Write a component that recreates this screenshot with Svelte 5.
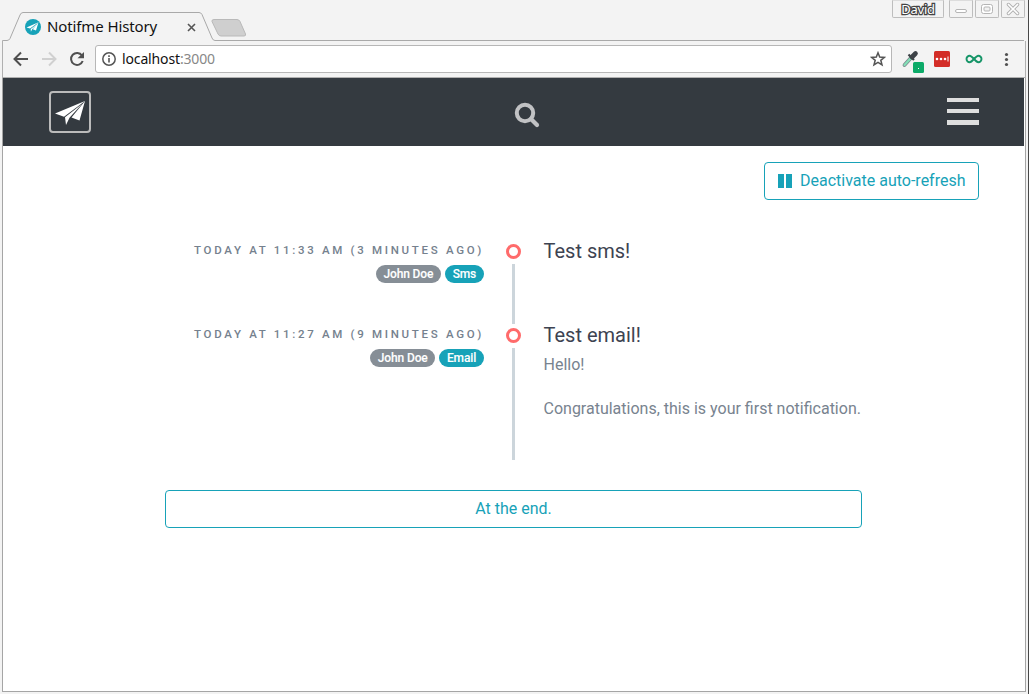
<script>
  const events = [
    { time: 'Today at 11:33 AM (3 minutes ago)', user: 'John Doe', channel: 'Sms', title: 'Test sms!', body: [] },
    {
      time: 'Today at 11:27 AM (9 minutes ago)',
      user: 'John Doe',
      channel: 'Email',
      title: 'Test email!',
      body: ['Hello!', 'Congratulations, this is your first notification.']
    }
  ];
</script>

<div class="window">
  <header class="tabstrip">
    <svg class="frame" width="1029" height="41" viewBox="0 0 1029 41" fill="none">
      <path d="M2 41Q2 40.5 4 40.5H7Q9 40.5 10 38.500L20 15Q21 12.500 23 12.500H199Q201 12.500 202 14.500L212 38Q213 40.500 215 40.500H1024" stroke="#a9a9a9" />
      <path d="M214 19.500H237Q239 19.500 240 21.500L245.500 34Q246 36 244 36H221Q219 36 218 34L212 21.500Q211.500 19.500 214 19.500Z" fill="#cfcfcf" stroke="#b9b9b9" />
    </svg>
    <div class="tab">
      <svg width="16" height="16" viewBox="0 0 16 16">
        <circle cx="8" cy="8" r="8" fill="#17a2b8" />
        <path d="M1.500 8.500L13.500 3.300 5 9.600ZM13.500 3.300L11 11.500 7.800 10.300ZM5.700 9.900L12 4.900 7.200 10.300 5.900 12.700Z" fill="#fff" />
      </svg>
      <span class="title">Notifme History</span>
      <svg class="x" width="9" height="9" viewBox="0 0 9 9"><path d="M1 1l7 7M8 1L1 8" stroke="#555" stroke-width="1.600" /></svg>
    </div>
    <div class="controls">
      <span class="control name">David</span>
      <span class="control"><svg width="24" height="17"><rect x="6.500" y="9.500" width="11" height="3" rx="1.500" fill="#fff" stroke="#b5b5b5" /></svg></span>
      <span class="control"><svg width="24" height="17"><rect x="6.500" y="4.500" width="11" height="9" rx="2" fill="#fff" stroke="#b5b5b5" /><rect x="9" y="7" width="6" height="4" rx="1" fill="#f2f2f2" stroke="#b5b5b5" /></svg></span>
      <span class="control"><svg width="24" height="17"><path d="M7.500 4.500l9 9m0-9l-9 9" stroke="#b0b0b0" stroke-width="3.500" stroke-linecap="round" /><path d="M7.500 4.500l9 9m0-9l-9 9" stroke="#fff" stroke-width="1.700" stroke-linecap="round" /></svg></span>
    </div>
  </header>

  <div class="toolbar">
    <svg class="nav" width="95" height="36" viewBox="0 0 95 36" fill="none">
      <path d="M28 18H15M21 11.500L14.500 18 21 24.500" stroke="#4f4f4f" stroke-width="2" />
      <path d="M42 18H55M49 11.500L55.500 18 49 24.500" stroke="#d0d0d0" stroke-width="2" />
      <path d="M82 14.500A6 6 0 1 0 82.700 20" stroke="#4f4f4f" stroke-width="2" />
      <path d="M84 11V17.200H77.500Z" fill="#4f4f4f" />
    </svg>
    <div class="address">
      <svg width="14" height="14" viewBox="0 0 14 14" fill="none"><circle cx="7" cy="7" r="6.200" stroke="#555" stroke-width="1.500" /><path d="M7 6v4.500M7 3.300v1.600" stroke="#555" stroke-width="1.600" /></svg>
      <span class="url">localhost<i>:3000</i></span>
      <svg class="star" width="16" height="16" viewBox="0 0 16 16"><path d="M8 1.800L9.700 6.100 14.300 6.400 10.800 9.300 12 13.900 8 11.400 4 13.900 5.200 9.300 1.700 6.400 6.300 6.100Z" fill="none" stroke="#555" stroke-width="1.500" /></svg>
    </div>
    <svg class="extensions" width="132" height="36" viewBox="892 41 132 36" fill="none">
      <path d="M904.500 65L911 57.800" stroke="#7d8a8e" stroke-width="3.800" stroke-linecap="round" />
      <path d="M904.500 65L910 59" stroke="#83dfb7" stroke-width="2.200" stroke-linecap="round" />
      <path d="M908.500 54.500L914 60" stroke="#3c4146" stroke-width="2.200" />
      <path d="M912 57L915.500 53.500" stroke="#3c4146" stroke-width="4.600" stroke-linecap="round" />
      <rect x="913" y="62" width="11" height="11" rx="1.500" fill="#0caa68" /><path d="M918 68.500h1" stroke="#fff" />
      <rect x="934" y="51" width="16" height="16" rx="1.500" fill="#d32d27" />
      <circle cx="937" cy="59" r="1.300" fill="#fff" /><circle cx="941" cy="59" r="1.300" fill="#fff" /><circle cx="945" cy="59" r="1.300" fill="#fff" /><path d="M948 56.500v5" stroke="#fff" />
      <path d="M974 59C972 56.800 971 55.800 969.700 55.800A3.200 3.200 0 0 0 969.700 62.200C972.500 62.200 975.500 55.800 978.300 55.800A3.200 3.200 0 0 1 978.300 62.200C977 62.200 976 61.200 974 59Z" stroke="#169568" stroke-width="1.900" />
      <g fill="#505050"><circle cx="1006.500" cy="54.500" r="1.600" /><circle cx="1006.500" cy="59.500" r="1.600" /><circle cx="1006.500" cy="64.500" r="1.600" /></g>
    </svg>
  </div>

  <main class="page">
    <nav class="navbar">
      <span class="logo">
        <svg width="38" height="38" viewBox="51 93 38 38">
          <path d="M55 113.500L85 101 64 116.700ZM85 101L79.500 120.500 71.500 117.500ZM65 117.300L82 104 69.500 117.800 66 125Z" fill="#fff" />
        </svg>
      </span>
      <svg class="search" width="26" height="26" viewBox="514 102 26 26" fill="none" stroke="#c1c2c4"><circle cx="525" cy="113" r="8.200" stroke-width="4" /><path d="M531 119L537 125" stroke-width="4.200" stroke-linecap="round" /></svg>
      <span class="burger"><b></b><b></b><b></b></span>
    </nav>
    <div class="actions">
      <button class="btn refresh">
        <svg width="14" height="14"><path d="M0 0h6v14h-6zM8 0h6v14h-6z" fill="#17a2b8" /></svg>
        <span>Deactivate auto-refresh</span>
      </button>
    </div>
    <section class="timeline">
      {#each events as event}
        <article class="event">
          <div class="info">
            <div class="time">{event.time}</div>
            <div class="badges"><span class="badge">{event.user}</span><span class="badge channel">{event.channel}</span></div>
          </div>
          <div class="marker"><span class="dot"></span><span class="line"></span></div>
          <div class="content">
            <h3>{event.title}</h3>
            {#each event.body as text}<p>{text}</p>{/each}
          </div>
        </article>
      {/each}
    </section>
    <button class="btn end">At the end.</button>
  </main>
</div>

<style>
  :global(body) { background: #f3f3f3; overflow: hidden; }
  * { box-sizing: border-box; }
  svg { display: block; flex: none; }
  .window { position: relative; width: 1029px; height: 694px; background: #f3f3f3; display: flex; flex-direction: column; border-right: 1px solid #484848; font-family: "Noto Sans", sans-serif; }
  .tabstrip { position: relative; height: 41px; display: flex; justify-content: space-between; }
  .frame { position: absolute; left: 0; top: 0; }
  .tab { position: relative; display: flex; align-items: center; height: 28px; margin: 13px 0 0 25px; }
  .title { width: 110px; margin: -2px 30px 0 6px; font: 15px/28px "Noto Sans", sans-serif; letter-spacing: -0.11px; color: #111; white-space: nowrap; }
  .controls { display: flex; gap: 2px; height: 18px; margin-right: 3px; }
  .control { width: 24px; height: 18px; border: 1px solid #bdbdbd; border-top-color: #dcdcdc; border-radius: 0 0 2px 2px; display: flex; justify-content: center; }
  .control svg { margin-top: -1px; }
  .name { width: 52px; margin-right: 3px; font: 13px/16px "Noto Sans", sans-serif; letter-spacing: -0.2px; color: #fff; -webkit-text-stroke: 2.5px #444; paint-order: stroke fill; }
  .toolbar { height: 37px; margin: 0 2px 0 2px; border: 1px solid #b0b0b0; border-width: 0 1px 1px; display: flex; }
  .nav { margin-left: -3px; }
  .address { width: 797px; height: 28px; margin-top: 4px; border: 1px solid #b7b7b7; border-radius: 3px; background: #fff; display: flex; align-items: center; padding: 0 5px 0 6px; }
  .url { margin-left: 6px; font-size: 14px; line-height: 26px; letter-spacing: -0.14px; color: #111; }
  .url i { font-style: normal; color: #888; }
  .star { margin-left: auto; }
  .page { height: 614px; margin: 0 2px; border: 1px solid #a5a5a5; border-width: 0 1px 1px; background: #fff; display: flex; flex-direction: column; font-family: Roboto, sans-serif; padding-right: 1px; }
  .navbar { height: 68px; flex: none; background: #343a40; display: flex; align-items: center; justify-content: space-between; padding: 0 45px 0 46px; }
  .logo { width: 42px; height: 42px; border: 2px solid #bbb; border-radius: 4px; }
  .search { margin: 6px 0 0 16px; }
  .burger { width: 32px; display: flex; flex-direction: column; gap: 7px; margin-top: -2px; }
  .burger b { height: 4px; background: #dedede; }
  .burger b:last-child { height: 5px; }
  .actions { display: flex; justify-content: flex-end; padding: 16px 45px 0 0; }
  .btn { height: 38px; border: 1px solid #17a2b8; border-radius: 4px; background: #fff; color: #17a2b8; font: 16px/24px Roboto, sans-serif; padding: 0 13px; }
  .refresh { width: 215px; display: flex; align-items: center; gap: 8px; white-space: nowrap; }
  .timeline { margin: 40px 0 0 162px; width: 697px; }
  .event { display: grid; grid-template-columns: 319px 59px 1fr; min-height: 84px; }
  .info { display: flex; flex-direction: column; align-items: flex-end; }
  .time { font-size: 11.500px; font-weight: 500; line-height: 16px; margin-top: 2px; letter-spacing: 2.69px; text-transform: uppercase; color: #75818e; white-space: nowrap; }
  .badges { display: flex; gap: 4px; margin-top: 7px; }
  .badge { height: 18px; border-radius: 9px; padding: 0 7.500px; background: #868e96; color: #fff; font-size: 12px; font-weight: 500; line-height: 18px; letter-spacing: -0.14px; -webkit-text-stroke: 0.1px #fff; }
  .channel { background: #17a2b8; padding: 0 7.900px; }
  .marker { display: flex; flex-direction: column; align-items: center; padding-top: 4px; }
  .dot { width: 15px; height: 15px; border: 3px solid #ff6b6b; border-radius: 50%; flex: none; }
  .line { width: 3px; flex: 1; margin: 5px 0 0; background: #ccd5db; }
  .content { padding-left: 0.500px; }
  h3 { margin: 0; font-size: 20px; line-height: 22px; font-weight: 400; color: #3d4351; }
  p { margin: 8px 0 22px; font-size: 16px; line-height: 22px; color: #78838f; white-space: nowrap; }
  .event:last-child { height: 136px; }
  .end { width: 697px; flex: none; margin: 30px 0 0 162px; }
</style>
